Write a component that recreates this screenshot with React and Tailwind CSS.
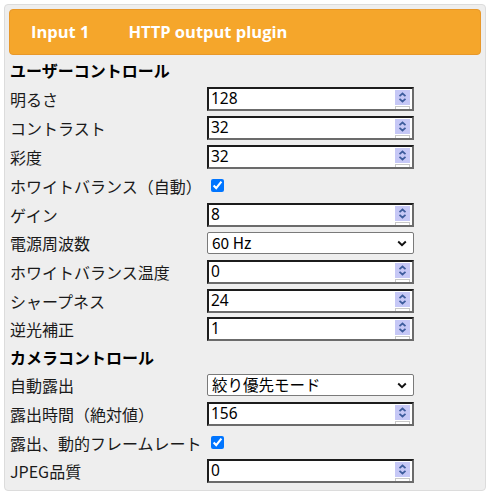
import React from 'react'

const jp = { fontFamily: '"Noto Sans CJK JP", "Noto Sans", sans-serif' }
const num = { fontFamily: '"Noto Sans", "Noto Sans CJK JP", sans-serif' }

function Spin() {
  return (
    <div className="absolute right-[2px] top-[1px] w-[15px] flex flex-col">
      <div className="h-[15px] bg-[#c6c8f6] flex items-center justify-center">
        <svg width="9" height="11" viewBox="0 0 9 11">
          <path d="M1.5 4.2 L4.5 1.5 L7.5 4.2" fill="none" stroke="#3d5c9c" strokeWidth="1.7" />
          <path d="M1.5 6.8 L4.5 9.5 L7.5 6.8" fill="none" stroke="#3d5c9c" strokeWidth="1.7" />
        </svg>
      </div>
      <div className="h-[5px] mt-[1px] bg-white border border-[#c8c8c8] border-b-0" />
    </div>
  )
}

function NumInput({ value }) {
  return (
    <div className="relative w-[207px] h-[24px] bg-white border-2 border-t-[#1c1c1c] border-l-[#1c1c1c] border-r-[#6b6b6b] border-b-[#6b6b6b] flex items-center pl-[2px] text-[15.5px] text-black overflow-hidden" style={num}>
      {value}
      <Spin />
    </div>
  )
}

function Select({ value }) {
  return (
    <div className="w-[207px] h-[22px] bg-white border border-[#7a7a7a] rounded-[2px] flex items-center justify-between pl-[4px] pr-[6px] text-[15.5px] text-black" style={jp}>
      <span>{value}</span>
      <svg width="10" height="7" viewBox="0 0 10 7">
        <path d="M1.2 1.5 L5 5.2 L8.8 1.5" fill="none" stroke="#111" strokeWidth="1.9" />
      </svg>
    </div>
  )
}

function Check() {
  return <input type="checkbox" defaultChecked className="w-[13px] h-[13px] ml-[4px] accent-[#0075ff]" />
}

function Row({ label, h, children }) {
  return (
    <div className={`flex items-center ${h}`}>
      <div className="w-[197px] text-[16px] text-[#1a1a1a] whitespace-nowrap" style={jp}>{label}</div>
      {children}
    </div>
  )
}

function Title({ children, top }) {
  return (
    <div className={`h-[28px] flex items-center text-[16px] font-bold text-black ${top || ''}`} style={jp}>{children}</div>
  )
}

export default function App() {
  return (
    <div className="w-[490px] h-[495px] bg-white p-[4px]">
      <div className="w-[482px] h-[487px] bg-[#eeeeee] border border-[#dcdcdc] rounded-[4px] px-[4px] pt-[4px]">
        <div className="h-[46px] bg-[#f5a62b] border border-[#e8982a] rounded-[4px] flex items-center pl-[21px] text-white font-bold text-[16.5px]" style={{ fontFamily: '"Open Sans", "Noto Sans", sans-serif' }}>
          <span>Input 1</span>
          <span className="ml-[39px]">HTTP output plugin</span>
        </div>
        <div className="pl-[1px]">
          <Title top="mt-[1px]">ユーザーコントロール</Title>
          <Row label="明るさ" h="h-[29px]"><NumInput value="128" /></Row>
          <Row label="コントラスト" h="h-[29px]"><NumInput value="32" /></Row>
          <Row label="彩度" h="h-[29px]"><NumInput value="32" /></Row>
          <Row label="ホワイトバランス（自動）" h="h-[29px]"><Check /></Row>
          <Row label="ゲイン" h="h-[29px]"><NumInput value="8" /></Row>
          <Row label="電源周波数" h="h-[28px]"><Select value="60 Hz" /></Row>
          <Row label="ホワイトバランス温度" h="h-[29px]"><NumInput value="0" /></Row>
          <Row label="シャープネス" h="h-[29px]"><NumInput value="24" /></Row>
          <Row label="逆光補正" h="h-[28px]"><NumInput value="1" /></Row>
          <Title>カメラコントロール</Title>
          <Row label="自動露出" h="h-[28px]"><Select value="絞り優先モード" /></Row>
          <Row label="露出時間（絶対値）" h="h-[29px]"><NumInput value="156" /></Row>
          <Row label="露出、動的フレームレート" h="h-[29px]"><Check /></Row>
          <Row label="JPEG品質" h="h-[28px]"><NumInput value="0" /></Row>
        </div>
      </div>
    </div>
  )
}
